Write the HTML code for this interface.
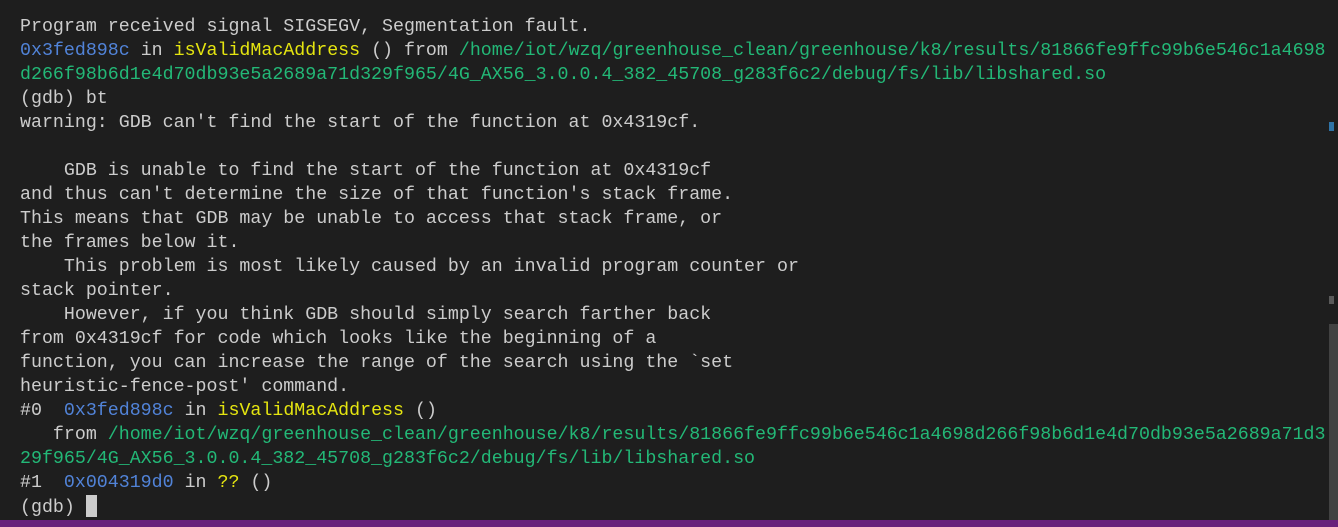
<!DOCTYPE html>
<html><head><meta charset="utf-8"><style>
html,body{margin:0;padding:0;width:1338px;height:527px;overflow:hidden;background:#1e1e1e}
pre{margin:0;position:absolute;left:20px;top:15px;font-family:"Liberation Mono",monospace;font-size:18.3px;line-height:24px;color:#cccccc;white-space:pre}
.b{color:#5183d8}.y{color:#e5e510}.g{color:#23b877}
.cur{display:inline-block;width:11px;height:22px;background:#cccccc;vertical-align:-5px}
.bar{position:absolute;left:0;top:520px;width:1338px;height:7px;background:#68217a}
.thumb{position:absolute;left:1329px;top:324px;width:9px;height:196px;background:#424242}
.m1{position:absolute;left:1329px;top:122px;width:5px;height:9px;background:#2f73a6}
.m2{position:absolute;left:1329px;top:296px;width:5px;height:8px;background:#5a5a5a}
</style></head><body>
<pre>Program received signal SIGSEGV, Segmentation fault.
<span class="b">0x3fed898c</span> in <span class="y">isValidMacAddress</span> () from <span class="g">/home/iot/wzq/greenhouse_clean/greenhouse/k8/results/81866fe9ffc99b6e546c1a4698</span>
<span class="g">d266f98b6d1e4d70db93e5a2689a71d329f965/4G_AX56_3.0.0.4_382_45708_g283f6c2/debug/fs/lib/libshared.so</span>
(gdb) bt
warning: GDB can't find the start of the function at 0x4319cf.

    GDB is unable to find the start of the function at 0x4319cf
and thus can't determine the size of that function's stack frame.
This means that GDB may be unable to access that stack frame, or
the frames below it.
    This problem is most likely caused by an invalid program counter or
stack pointer.
    However, if you think GDB should simply search farther back
from 0x4319cf for code which looks like the beginning of a
function, you can increase the range of the search using the `set
heuristic-fence-post' command.
#0  <span class="b">0x3fed898c</span> in <span class="y">isValidMacAddress</span> ()
   from <span class="g">/home/iot/wzq/greenhouse_clean/greenhouse/k8/results/81866fe9ffc99b6e546c1a4698d266f98b6d1e4d70db93e5a2689a71d3</span>
<span class="g">29f965/4G_AX56_3.0.0.4_382_45708_g283f6c2/debug/fs/lib/libshared.so</span>
#1  <span class="b">0x004319d0</span> in <span class="y">??</span> ()
(gdb) <span class="cur"></span></pre>
<div class="m1"></div><div class="m2"></div><div class="thumb"></div><div class="bar"></div>
</body></html>
